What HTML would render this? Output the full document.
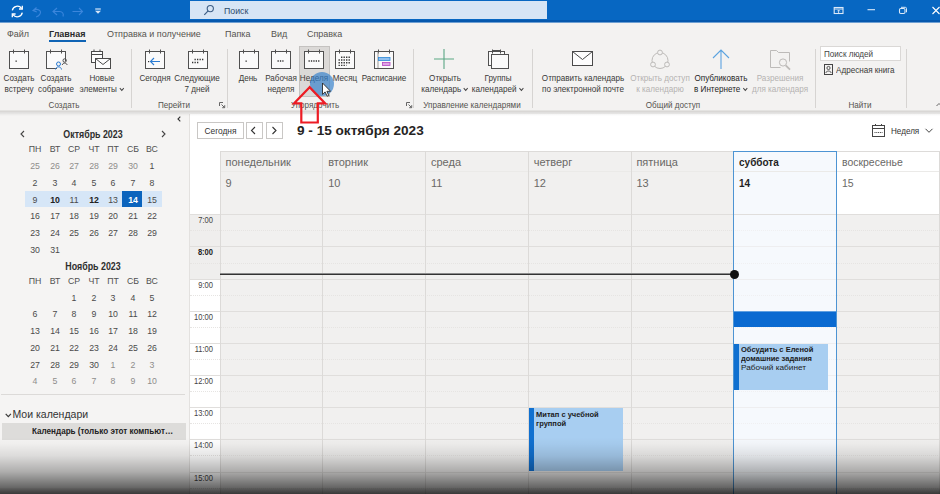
<!DOCTYPE html>
<html lang="ru"><head><meta charset="utf-8"><title>Календарь - Outlook</title>
<style>
html,body{margin:0;padding:0;}
body{width:940px;height:494px;overflow:hidden;position:relative;background:#f3f2f1;font-family:"Liberation Sans",sans-serif;font-size:9.5px;color:#3b3a39;}
.a{position:absolute;}
.t{position:absolute;white-space:nowrap;line-height:12px;transform-origin:0 50%;}
.c{position:absolute;white-space:nowrap;text-align:center;line-height:10.8px;font-size:9px;transform:scaleX(.90);transform-origin:50% 50%;}
.dis{color:#b5b3b1;}
.sep{position:absolute;width:1px;background:#d6d4d2;top:49px;height:59px;}
.gl{position:absolute;top:99.300px;line-height:12px;text-align:center;white-space:nowrap;color:#55534f;font-size:9px;transform:scaleX(.90);transform-origin:50% 50%;}
svg{position:absolute;overflow:visible;}
.mc{position:absolute;width:20px;text-align:center;line-height:14px;font-size:9.500px;color:#4a4a4a;transform:scaleX(.92);}
.mc.g{color:#8f8d8b;}
.mc.b{font-weight:bold;color:#222;}
.mc.w{font-weight:bold;color:#fff;}
.hl{position:absolute;left:220px;right:0;height:1px;background:#e0dedc;}
.hh{position:absolute;left:190px;right:0;height:0;border-top:1px dotted #e6e4e2;}
.vl{position:absolute;top:151px;bottom:0;width:1px;background:#dcdad8;}
.tm{position:absolute;left:183px;width:30px;text-align:right;font-size:8.300px;line-height:10px;color:#444;transform:scaleX(.91);transform-origin:100% 50%;}
.dn{position:absolute;top:155px;font-size:11px;line-height:14px;color:#6a6866;}
.dd{position:absolute;top:176px;font-size:11px;line-height:14px;color:#6a6866;}
</style></head><body>

<div class="a" style="left:0;top:0;width:940px;height:22px;background:#0767c2;"></div>
<div class="a" style="left:0;top:20px;width:940px;height:2px;background:#0658ad;"></div>
<div class="a" style="left:0;top:22px;width:940px;height:1px;background:#6e9fd2;"></div>
<div class="a" style="left:190px;top:1px;width:357px;height:18px;background:#d6e5f5;"></div>
<div class="t" style="left:223.500px;top:4.800px;font-size:9.500px;color:#2b4a6b;transform:scaleX(.92);">Поиск</div>
<svg style="left:203px;top:4px" width="12" height="12" viewBox="0 0 12 12"><circle cx="7.3" cy="4.6" r="3.1" fill="none" stroke="#3d5f86" stroke-width="1.1"/><path d="M5.1 6.9L1.3 10.8" stroke="#3d5f86" stroke-width="1.2" fill="none"/></svg>
<svg style="left:10px;top:4px" width="100" height="16" viewBox="0 0 100 16"><path d="M2.300 6.300A5.200 5.200 0 0 1 11.600 4.300M12.300 8.700A5.200 5.200 0 0 1 3 10.700" fill="none" stroke="#fff" stroke-width="1.300"/><path d="M12.300 1.800V5H9" fill="none" stroke="#fff" stroke-width="1.300"/><path d="M2.300 13.200V10H5.600" fill="none" stroke="#fff" stroke-width="1.300"/><path d="M26.500 3.500l-3.500 3 3.800 1.600M23.300 6.600c4-2.600 8.500-.4 6.700 3.400-.7 1.400-2.200 2.400-3.800 3" fill="none" stroke="#3b86dc" stroke-width="1.100"/><path d="M47 4l-4 3.500 4 3.500M43 7.500h6.500c3 0 4.500 2.200 3.500 5" fill="none" stroke="#3b86dc" stroke-width="1.100"/><path d="M62.500 7.500h10M69 4l3.500 3.500-3.500 3.500" fill="none" stroke="#3b86dc" stroke-width="1.100"/><path d="M85.200 5h5.600" stroke="#d5e6f8" stroke-width="1.200"/><path d="M85 6.800h6l-3 3z" fill="#d5e6f8"/></svg>
<svg style="left:833px;top:4px" width="107" height="14" viewBox="0 0 107 14"><rect x="1.200" y="3.500" width="8.800" height="6" fill="none" stroke="#dbe9f8" stroke-width="1.100"/><path d="M1.200 5h8.800" stroke="#dbe9f8" stroke-width="1"/><path d="M5.600 9V6.200M4.300 7.300l1.300-1.300 1.300 1.300" fill="none" stroke="#dbe9f8" stroke-width=".9"/><path d="M34.500 5.700h7.500" stroke="#dbe9f8" stroke-width="1.100"/><rect x="66.500" y="4.500" width="5.500" height="5" rx="1.200" fill="none" stroke="#dbe9f8" stroke-width="1.100"/><path d="M68 3.300h4.300q1.200 0 1.200 1.200v3.800" fill="none" stroke="#dbe9f8" stroke-width="1"/><path d="M99.500 3l7 7M106.500 3l-7 7" stroke="#fff" stroke-width="1.100"/></svg>
<div class="t" style="left:7px;top:28px;font-size:9.500px;transform:scaleX(.945);color:#55534f;">Файл</div>
<div class="t" style="left:49px;top:28px;font-size:9.500px;transform:scaleX(.945);font-weight:bold;color:#2a2a2a;">Главная</div>
<div class="t" style="left:107px;top:28px;font-size:9.500px;transform:scaleX(.945);color:#55534f;">Отправка и получение</div>
<div class="t" style="left:225px;top:28px;font-size:9.500px;transform:scaleX(.945);color:#55534f;">Папка</div>
<div class="t" style="left:271px;top:28px;font-size:9.500px;transform:scaleX(.945);color:#55534f;">Вид</div>
<div class="t" style="left:307px;top:28px;font-size:9.500px;transform:scaleX(.945);color:#55534f;">Справка</div>
<div class="a" style="left:48.500px;top:40.300px;width:37.500px;height:2px;background:#0f64b5;"></div>
<div class="a" style="left:0;top:110px;width:940px;height:1px;background:#e4e3e1;"></div>
<div class="a" style="left:0;top:111px;width:940px;height:1px;background:#d9d7d5;"></div>
<svg style="left:9px;top:49px" width="21" height="21" viewBox="0 0 21 21"><rect x="0.500" y="2.500" width="19" height="17" fill="#fafafa" stroke="#505050" stroke-width="1"/><path d="M4.500 0.500v4M15.500 0.500v4" stroke="#505050" stroke-width="1"/><rect x="6.5" y="11.5" width="1.3" height="1.3" fill="#333"/></svg>
<div class="c" style="left:-21.2px;top:73px;width:80px;">Создать<br>встречу</div>
<svg style="left:46px;top:49px" width="21" height="21" viewBox="0 0 21 21"><rect x="0.500" y="2.500" width="19" height="17" fill="#fafafa" stroke="#505050" stroke-width="1"/><path d="M4.500 0.500v4M15.500 0.500v4" stroke="#505050" stroke-width="1"/><rect x="11" y="12" width="10" height="9" fill="#f3f2f1"/><circle cx="12.5" cy="15" r="2" fill="none" stroke="#2b7cd3" stroke-width="1"/><path d="M9.5 20.5c.4-3.5 5.6-3.5 6 0" fill="none" stroke="#2b7cd3" stroke-width="1"/><circle cx="18.7" cy="11.5" r="1.7" fill="none" stroke="#4a4a4a" stroke-width="1"/><path d="M16.3 16c.5-2.6 4.3-2.6 4.8 0" fill="none" stroke="#4a4a4a" stroke-width="1"/></svg>
<div class="c" style="left:16.0px;top:73px;width:80px;">Создать<br>собрание</div>
<svg style="left:91px;top:49px" width="22" height="22" viewBox="0 0 22 22"><rect x="0.5" y="2.5" width="11" height="11" fill="#fdfdfd" stroke="#4a4a4a"/><path d="M0.5 5.5h11M3 0.5v2.5M9 0.5v2.5" stroke="#4a4a4a"/><rect x="4.5" y="9.500" width="15" height="10" fill="#fdfdfd" stroke="#4a4a4a"/><path d="M4.5 9.5l7.500 6 7.500-6" fill="none" stroke="#4a4a4a"/></svg>
<div class="c" style="left:61.5px;top:73px;width:80px;">Новые<br>элементы <svg style="position:static;display:inline-block;vertical-align:0" width="6" height="5" viewBox="0 0 6 5"><path d="M0.800 1.200l2.200 2.200 2.200-2.200" fill="none" stroke="#444" stroke-width="1.100"/></svg></div>
<div class="gl" style="left:33.900px;width:60px;">Создать</div>
<div class="sep" style="left:131px;"></div>
<svg style="left:145px;top:49px" width="21" height="21" viewBox="0 0 21 21"><rect x="0.500" y="2.500" width="19" height="17" fill="#fafafa" stroke="#505050" stroke-width="1"/><path d="M4.500 0.500v4M15.500 0.500v4" stroke="#505050" stroke-width="1"/><path d="M5 12.500h10M9 9l-3.500 3.500 3.500 3.500" fill="none" stroke="#2b7cd3" stroke-width="1.1"/><rect x="3" y="12" width="1.200" height="1.200" fill="#333"/></svg>
<div class="c" style="left:114.6px;top:73px;width:80px;">Сегодня</div>
<svg style="left:187.5px;top:49px" width="21" height="21" viewBox="0 0 21 21"><rect x="0.500" y="2.500" width="19" height="17" fill="#fafafa" stroke="#505050" stroke-width="1"/><path d="M4.500 0.500v4M15.500 0.500v4" stroke="#505050" stroke-width="1"/><path d="M6.500 10.500h9.500M4 13.500h7" stroke="#333" stroke-width="1.300" stroke-dasharray="1.3 1.2"/></svg>
<div class="c" style="left:157.3px;top:73px;width:80px;">Следующие<br>7 дней</div>
<div class="gl" style="left:143.800px;width:60px;">Перейти</div>
<svg style="left:219px;top:102px" width="7" height="7" viewBox="0 0 7 7"><path d="M0.500 4V0.500H4" fill="none" stroke="#666"/><path d="M2.500 2.500l3 3M5.700 3.200v2.500H3.200" fill="none" stroke="#666"/></svg>
<div class="sep" style="left:227px;"></div>
<svg style="left:238.5px;top:49px" width="21" height="21" viewBox="0 0 21 21"><rect x="0.500" y="2.500" width="19" height="17" fill="#fafafa" stroke="#505050" stroke-width="1"/><path d="M4.500 0.500v4M15.500 0.500v4" stroke="#505050" stroke-width="1"/><rect x="6.500" y="11.500" width="1.300" height="1.300" fill="#333"/></svg>
<div class="c" style="left:208.1px;top:73px;width:80px;">День</div>
<svg style="left:270.5px;top:49px" width="21" height="21" viewBox="0 0 21 21"><rect x="0.500" y="2.500" width="19" height="17" fill="#fafafa" stroke="#505050" stroke-width="1"/><path d="M4.500 0.500v4M15.500 0.500v4" stroke="#505050" stroke-width="1"/><path d="M6.500 12h6" stroke="#333" stroke-width="1.300" stroke-dasharray="1.3 1.1"/></svg>
<div class="c" style="left:240.8px;top:73px;width:80px;">Рабочая<br>неделя</div>
<div class="a" style="left:299px;top:46px;width:31px;height:51px;background:#dbd9d7;border:1px solid #c4c2c0;box-sizing:border-box;"></div>
<svg style="left:304px;top:49px" width="21" height="21" viewBox="0 0 21 21"><rect x="0.500" y="2.500" width="19" height="17" fill="#fafafa" stroke="#505050" stroke-width="1"/><path d="M4.500 0.500v4M15.500 0.500v4" stroke="#505050" stroke-width="1"/><path d="M4.500 12h11" stroke="#333" stroke-width="1.300" stroke-dasharray="1.3 1.1"/></svg>
<div class="c" style="left:274.4px;top:73px;width:80px;">Неделя</div>
<svg style="left:335px;top:49px" width="21" height="21" viewBox="0 0 21 21"><rect x="0.500" y="2.500" width="19" height="17" fill="#fafafa" stroke="#505050" stroke-width="1"/><path d="M4.500 0.500v4M15.500 0.500v4" stroke="#505050" stroke-width="1"/><path d="M6 8.300h10M3.500 11h12.500M3.500 13.700h12.500M3.500 16.400h8" stroke="#3a3a3a" stroke-width="1.400" stroke-dasharray="1.4 1.1"/></svg>
<div class="c" style="left:305.0px;top:73px;width:80px;">Месяц</div>
<svg style="left:374px;top:49px" width="21" height="21" viewBox="0 0 21 21"><rect x="0.500" y="2.500" width="19" height="17" fill="#fafafa" stroke="#505050"/><path d="M4.500 0.500v4M15.500 0.500v4" stroke="#505050"/><path d="M4 3v16" stroke="#9a9896"/><rect x="4.500" y="8.500" width="11.500" height="3" fill="#8fc0f0" stroke="#2b88d8" stroke-width=".8"/><rect x="8.500" y="13.500" width="7.500" height="3" fill="#dfa3e6" stroke="#b146c2" stroke-width=".8"/></svg>
<div class="c" style="left:343.8px;top:73px;width:80px;">Расписание</div>
<div class="gl" style="left:285.200px;width:60px;">Упорядочить</div>
<svg style="left:405.5px;top:102px" width="7" height="7" viewBox="0 0 7 7"><path d="M0.500 4V0.500H4" fill="none" stroke="#666"/><path d="M2.500 2.500l3 3M5.700 3.200v2.500H3.200" fill="none" stroke="#666"/></svg>
<div class="sep" style="left:413px;"></div>
<svg style="left:433px;top:48px" width="22" height="22" viewBox="0 0 22 22"><path d="M11 1v20M1 11h20" stroke="#5aa784" stroke-width="1.100"/></svg>
<div class="c" style="left:405.0px;top:73px;width:80px;">Открыть<br>календарь <svg style="position:static;display:inline-block;vertical-align:0" width="6" height="5" viewBox="0 0 6 5"><path d="M0.800 1.200l2.200 2.200 2.200-2.200" fill="none" stroke="#444" stroke-width="1.100"/></svg></div>
<svg style="left:488px;top:49px" width="22" height="22" viewBox="0 0 22 22"><rect x="0.500" y="2.500" width="16" height="14" fill="#fafafa" stroke="#505050"/><path d="M4.500 0.500v4M12.500 0.500v4M4.500 1.500h8" stroke="#505050"/><rect x="3.500" y="5.500" width="17" height="14" fill="#fafafa" stroke="#505050"/></svg>
<div class="c" style="left:458.0px;top:73px;width:80px;">Группы<br>календарей <svg style="position:static;display:inline-block;vertical-align:0" width="6" height="5" viewBox="0 0 6 5"><path d="M0.800 1.200l2.200 2.200 2.200-2.200" fill="none" stroke="#444" stroke-width="1.100"/></svg></div>
<div class="gl" style="left:412.400px;width:120px;">Управление календарями</div>
<div class="sep" style="left:532px;"></div>
<svg style="left:572px;top:51px" width="22" height="16" viewBox="0 0 22 16"><rect x="0.500" y="0.500" width="20" height="14" fill="#fdfdfd" stroke="#4a4a4a"/><path d="M0.500 0.500l10 8 10-8" fill="none" stroke="#4a4a4a"/></svg>
<div class="c" style="left:527.6px;top:73px;width:110px;">Отправить календарь<br>по электронной почте</div>
<svg style="left:649px;top:48px" width="22" height="22" viewBox="0 0 22 22"><circle cx="11" cy="12.500" r="8" fill="none" stroke="#bdbbb9"/><circle cx="11" cy="4.500" r="2.400" fill="#f3f2f1" stroke="#bdbbb9"/><circle cx="4" cy="16.500" r="2.400" fill="#f3f2f1" stroke="#bdbbb9"/><circle cx="18" cy="16.500" r="2.400" fill="#f3f2f1" stroke="#bdbbb9"/></svg>
<div class="c dis" style="left:619.8px;top:73px;width:80px;">Открыть доступ<br>к календарю</div>
<svg style="left:710px;top:48px" width="22" height="22" viewBox="0 0 22 22"><path d="M11 21V2M3 10l8-8 8 8" fill="none" stroke="#5ba3e0" stroke-width="1.100"/></svg>
<div class="c" style="left:681.0px;top:73px;width:80px;color:#262626;">Опубликовать<br>в Интернете <svg style="position:static;display:inline-block;vertical-align:0" width="6" height="5" viewBox="0 0 6 5"><path d="M0.800 1.200l2.200 2.200 2.200-2.200" fill="none" stroke="#444" stroke-width="1.100"/></svg></div>
<svg style="left:770px;top:49px" width="22" height="22" viewBox="0 0 22 22"><path d="M0.500 18.500V1.500h6l2 2h11v9" fill="none" stroke="#bdbbb9"/><path d="M0.500 18.500h10" stroke="#bdbbb9"/><circle cx="13" cy="13.500" r="3.600" fill="#f3f2f1" stroke="#bdbbb9"/><path d="M15.700 16.300l4.300 4.300" stroke="#bdbbb9" stroke-width="1.800"/></svg>
<div class="c dis" style="left:739.8px;top:73px;width:80px;">Разрешения<br>для календаря</div>
<div class="gl" style="left:632.600px;width:80px;">Общий доступ</div>
<div class="sep" style="left:815px;"></div>
<div class="a" style="left:820px;top:46px;width:81px;height:15px;background:#fff;border:1px solid #dad8d6;box-sizing:border-box;"></div>
<div class="t" style="left:823.500px;top:47.500px;font-size:9px;color:#444;transform:scaleX(.9);">Поиск людей</div>
<svg style="left:824px;top:64px" width="10" height="12" viewBox="0 0 10 12"><rect x="0.500" y="0.500" width="8" height="10" fill="none" stroke="#444"/><circle cx="4.500" cy="4" r="1.600" fill="none" stroke="#444" stroke-width=".9"/><path d="M1.800 9c.4-2.600 5-2.600 5.400 0" fill="none" stroke="#444" stroke-width=".9"/></svg>
<div class="t" style="left:836px;top:63.500px;font-size:9px;color:#3b3a39;transform:scaleX(.9);">Адресная книга</div>
<div class="gl" style="left:830px;width:60px;">Найти</div>
<div class="sep" style="left:906px;"></div>
<svg style="left:936px;top:102px" width="6" height="5" viewBox="0 0 6 5"><path d="M0.500 4l2.500-2.500 2.500 2.500" fill="none" stroke="#666"/></svg>
<div class="a" style="left:0;top:114px;width:189px;height:380px;background:#f5f4f3;"></div>
<svg style="left:176.500px;top:115.500px" width="4" height="6" viewBox="0 0 4 6"><path d="M3.300 0.700l-2.300 2.300 2.300 2.300" fill="none" stroke="#333" stroke-width="1.100"/></svg>
<div class="a" style="left:25px;top:191px;width:137px;height:16px;background:#d6e6f7;"></div>
<div class="a" style="left:122px;top:191px;width:20px;height:16px;background:#0b64bd;"></div>
<div class="a" style="left:43px;top:127.5px;width:100px;text-align:center;white-space:nowrap;font-weight:bold;font-size:10px;color:#2e2e2e;line-height:14px;transform:scaleX(.885);">Октябрь 2023</div>
<div class="mc" style="left:25px;top:141.8px;font-size:9.500px;color:#505050;">ПН</div>
<div class="mc" style="left:44.5px;top:141.8px;font-size:9.500px;color:#505050;">ВТ</div>
<div class="mc" style="left:64px;top:141.8px;font-size:9.500px;color:#505050;">СР</div>
<div class="mc" style="left:83.5px;top:141.8px;font-size:9.500px;color:#505050;">ЧТ</div>
<div class="mc" style="left:103px;top:141.8px;font-size:9.500px;color:#505050;">ПТ</div>
<div class="mc" style="left:122.5px;top:141.8px;font-size:9.500px;color:#505050;">СБ</div>
<div class="mc" style="left:142px;top:141.8px;font-size:9.500px;color:#505050;">ВС</div>
<div class="mc g" style="left:25px;top:158.8px;">25</div>
<div class="mc g" style="left:44.5px;top:158.8px;">26</div>
<div class="mc g" style="left:64px;top:158.8px;">27</div>
<div class="mc g" style="left:83.5px;top:158.8px;">28</div>
<div class="mc g" style="left:103px;top:158.8px;">29</div>
<div class="mc g" style="left:122.5px;top:158.8px;">30</div>
<div class="mc " style="left:142px;top:158.8px;">1</div>
<div class="mc " style="left:25px;top:175.7px;">2</div>
<div class="mc " style="left:44.5px;top:175.7px;">3</div>
<div class="mc " style="left:64px;top:175.7px;">4</div>
<div class="mc " style="left:83.5px;top:175.7px;">5</div>
<div class="mc " style="left:103px;top:175.7px;">6</div>
<div class="mc " style="left:122.5px;top:175.7px;">7</div>
<div class="mc " style="left:142px;top:175.7px;">8</div>
<div class="mc " style="left:25px;top:192.5px;">9</div>
<div class="mc b" style="left:44.5px;top:192.5px;">10</div>
<div class="mc " style="left:64px;top:192.5px;">11</div>
<div class="mc b" style="left:83.5px;top:192.5px;">12</div>
<div class="mc " style="left:103px;top:192.5px;">13</div>
<div class="mc w" style="left:122.5px;top:192.5px;">14</div>
<div class="mc " style="left:142px;top:192.5px;">15</div>
<div class="mc " style="left:25px;top:209.4px;">16</div>
<div class="mc " style="left:44.5px;top:209.4px;">17</div>
<div class="mc " style="left:64px;top:209.4px;">18</div>
<div class="mc " style="left:83.5px;top:209.4px;">19</div>
<div class="mc " style="left:103px;top:209.4px;">20</div>
<div class="mc " style="left:122.5px;top:209.4px;">21</div>
<div class="mc " style="left:142px;top:209.4px;">22</div>
<div class="mc " style="left:25px;top:226.2px;">23</div>
<div class="mc " style="left:44.5px;top:226.2px;">24</div>
<div class="mc " style="left:64px;top:226.2px;">25</div>
<div class="mc " style="left:83.5px;top:226.2px;">26</div>
<div class="mc " style="left:103px;top:226.2px;">27</div>
<div class="mc " style="left:122.5px;top:226.2px;">28</div>
<div class="mc " style="left:142px;top:226.2px;">29</div>
<div class="mc " style="left:25px;top:243.1px;">30</div>
<div class="mc " style="left:44.5px;top:243.1px;">31</div>
<div class="a" style="left:43px;top:259.8px;width:100px;text-align:center;white-space:nowrap;font-weight:bold;font-size:10px;color:#2e2e2e;line-height:14px;transform:scaleX(.885);">Ноябрь 2023</div>
<div class="mc" style="left:25px;top:274.3px;font-size:9.500px;color:#505050;">ПН</div>
<div class="mc" style="left:44.5px;top:274.3px;font-size:9.500px;color:#505050;">ВТ</div>
<div class="mc" style="left:64px;top:274.3px;font-size:9.500px;color:#505050;">СР</div>
<div class="mc" style="left:83.5px;top:274.3px;font-size:9.500px;color:#505050;">ЧТ</div>
<div class="mc" style="left:103px;top:274.3px;font-size:9.500px;color:#505050;">ПТ</div>
<div class="mc" style="left:122.5px;top:274.3px;font-size:9.500px;color:#505050;">СБ</div>
<div class="mc" style="left:142px;top:274.3px;font-size:9.500px;color:#505050;">ВС</div>
<div class="mc " style="left:64px;top:290.5px;">1</div>
<div class="mc " style="left:83.5px;top:290.5px;">2</div>
<div class="mc " style="left:103px;top:290.5px;">3</div>
<div class="mc " style="left:122.5px;top:290.5px;">4</div>
<div class="mc " style="left:142px;top:290.5px;">5</div>
<div class="mc " style="left:25px;top:307.2px;">6</div>
<div class="mc " style="left:44.5px;top:307.2px;">7</div>
<div class="mc " style="left:64px;top:307.2px;">8</div>
<div class="mc " style="left:83.5px;top:307.2px;">9</div>
<div class="mc " style="left:103px;top:307.2px;">10</div>
<div class="mc " style="left:122.5px;top:307.2px;">11</div>
<div class="mc " style="left:142px;top:307.2px;">12</div>
<div class="mc " style="left:25px;top:324.0px;">13</div>
<div class="mc " style="left:44.5px;top:324.0px;">14</div>
<div class="mc " style="left:64px;top:324.0px;">15</div>
<div class="mc " style="left:83.5px;top:324.0px;">16</div>
<div class="mc " style="left:103px;top:324.0px;">17</div>
<div class="mc " style="left:122.5px;top:324.0px;">18</div>
<div class="mc " style="left:142px;top:324.0px;">19</div>
<div class="mc " style="left:25px;top:340.8px;">20</div>
<div class="mc " style="left:44.5px;top:340.8px;">21</div>
<div class="mc " style="left:64px;top:340.8px;">22</div>
<div class="mc " style="left:83.5px;top:340.8px;">23</div>
<div class="mc " style="left:103px;top:340.8px;">24</div>
<div class="mc " style="left:122.5px;top:340.8px;">25</div>
<div class="mc " style="left:142px;top:340.8px;">26</div>
<div class="mc " style="left:25px;top:357.5px;">27</div>
<div class="mc " style="left:44.5px;top:357.5px;">28</div>
<div class="mc " style="left:64px;top:357.5px;">29</div>
<div class="mc " style="left:83.5px;top:357.5px;">30</div>
<div class="mc g" style="left:103px;top:357.5px;">1</div>
<div class="mc g" style="left:122.5px;top:357.5px;">2</div>
<div class="mc g" style="left:142px;top:357.5px;">3</div>
<div class="mc g" style="left:25px;top:374.2px;">4</div>
<div class="mc g" style="left:44.5px;top:374.2px;">5</div>
<div class="mc g" style="left:64px;top:374.2px;">6</div>
<div class="mc g" style="left:83.5px;top:374.2px;">7</div>
<div class="mc g" style="left:103px;top:374.2px;">8</div>
<div class="mc g" style="left:122.5px;top:374.2px;">9</div>
<div class="mc g" style="left:142px;top:374.2px;">10</div>
<svg style="left:20px;top:130px" width="5" height="8" viewBox="0 0 5 8"><path d="M4 1l-3 3 3 3" fill="none" stroke="#444" stroke-width="1.100"/></svg>
<svg style="left:161px;top:130px" width="5" height="8" viewBox="0 0 5 8"><path d="M1 1l3 3-3 3" fill="none" stroke="#444" stroke-width="1.100"/></svg>
<div class="a" style="left:1px;top:394px;width:184px;height:1px;background:#dcdad8;"></div>
<svg style="left:4.500px;top:412.500px" width="7" height="5" viewBox="0 0 7 5"><path d="M0.700 0.800l2.600 2.800 2.600-2.800" fill="none" stroke="#3a3a3a" stroke-width="1.200"/></svg>
<div class="t" style="left:12.500px;top:407px;font-size:10.500px;color:#333;line-height:14px;">Мои календари</div>
<div class="a" style="left:1.500px;top:423px;width:184.500px;height:16.500px;background:#dddcda;"></div>
<div class="t" style="left:31.700px;top:425px;font-size:9px;font-weight:bold;color:#222;line-height:12px;transform:scaleX(.9);">Календарь (только этот компьют…</div>
<div class="a" style="left:189px;top:114px;width:751px;height:380px;background:#fff;"></div>
<div class="a" style="left:189px;top:114px;width:1px;height:380px;background:#e3e1df;"></div>
<div class="a" style="left:197px;top:122px;width:47px;height:17px;border:1px solid #c9c7c5;box-sizing:border-box;background:#fff;"></div>
<div class="c" style="left:197px;top:124.500px;width:47px;font-size:9.300px;color:#333;line-height:12px;">Сегодня</div>
<div class="a" style="left:246px;top:122px;width:17px;height:17px;border:1px solid #c9c7c5;box-sizing:border-box;background:#fff;"></div>
<svg style="left:249px;top:124px" width="11" height="13" viewBox="0 0 11 13"><path d="M6 3l-3.500 3.500 3.500 3.500" fill="none" stroke="#333" stroke-width="1.100"/></svg>
<div class="a" style="left:266px;top:122px;width:17px;height:17px;border:1px solid #c9c7c5;box-sizing:border-box;background:#fff;"></div>
<svg style="left:269px;top:124px" width="11" height="13" viewBox="0 0 11 13"><path d="M3.500 3l3.500 3.500-3.500 3.500" fill="none" stroke="#333" stroke-width="1.100"/></svg>
<div class="t" style="left:297px;top:123px;font-size:13.600px;font-weight:bold;color:#252423;line-height:16px;">9 - 15 октября 2023</div>
<svg style="left:872px;top:124px" width="14" height="14" viewBox="0 0 14 14"><rect x="0.500" y="1.500" width="12" height="11" fill="none" stroke="#444"/><path d="M0.500 4.500h12M3.500 0v2M9.500 0v2" stroke="#444"/><path d="M2.500 8.500h8" stroke="#444" stroke-dasharray="1 .8"/></svg>
<div class="t" style="left:891px;top:125.300px;font-size:9px;color:#333;transform:scaleX(.9);">Неделя</div>
<svg style="left:925px;top:128px" width="8" height="6" viewBox="0 0 8 6"><path d="M0.500 0.800l3.500 3.500 3.500-3.500" fill="none" stroke="#444"/></svg>
<div class="a" style="left:220px;top:151px;width:616px;height:343px;background:#f1f0ef;"></div>
<div class="a" style="left:836px;top:214px;width:104px;height:280px;background:#f1f0ef;"></div>
<div class="a" style="left:734px;top:151px;width:102px;height:343px;background:#f6f9fd;"></div>
<div class="a" style="left:220px;top:151px;width:720px;height:1px;background:#dddbd9;"></div>
<div class="a" style="left:220px;top:171px;width:719px;height:1px;background:#ebeae8;"></div>
<div class="a" style="left:190px;top:214px;width:30px;height:65px;background:#efeeed;"></div>
<div class="a" style="left:939px;top:151px;width:1px;height:343px;background:#e9e8e7;"></div>
<div class="hl" style="top:214px;left:190px;"></div>
<div class="hh" style="top:230px;"></div>
<div class="tm" style="top:215px;">7:00</div>
<div class="hl" style="top:246px;left:190px;"></div>
<div class="hh" style="top:263px;"></div>
<div class="tm" style="top:247px;font-weight:bold;color:#222;">8:00</div>
<div class="hl" style="top:279px;left:190px;"></div>
<div class="hh" style="top:295px;"></div>
<div class="tm" style="top:280px;">9:00</div>
<div class="hl" style="top:311px;left:190px;"></div>
<div class="hh" style="top:327px;"></div>
<div class="tm" style="top:312px;">10:00</div>
<div class="hl" style="top:343px;left:190px;"></div>
<div class="hh" style="top:359px;"></div>
<div class="tm" style="top:344px;">11:00</div>
<div class="hl" style="top:375px;left:190px;"></div>
<div class="hh" style="top:391px;"></div>
<div class="tm" style="top:376px;">12:00</div>
<div class="hl" style="top:407px;left:190px;"></div>
<div class="hh" style="top:423px;"></div>
<div class="tm" style="top:408px;">13:00</div>
<div class="hl" style="top:439px;left:190px;"></div>
<div class="hh" style="top:455px;"></div>
<div class="tm" style="top:440px;">14:00</div>
<div class="hl" style="top:472px;left:190px;"></div>
<div class="hh" style="top:488px;"></div>
<div class="tm" style="top:473px;">15:00</div>
<div class="vl" style="left:220px;"></div>
<div class="vl" style="left:322px;"></div>
<div class="vl" style="left:425px;"></div>
<div class="vl" style="left:528px;"></div>
<div class="vl" style="left:631px;"></div>
<div class="vl" style="left:733px;"></div>
<div class="vl" style="left:836px;"></div>
<div class="vl" style="left:939px;"></div>
<div class="dn" style="left:225.5px;">понедельник</div>
<div class="dd" style="left:225.5px;">9</div>
<div class="dn" style="left:328.2px;">вторник</div>
<div class="dd" style="left:328.2px;">10</div>
<div class="dn" style="left:431.0px;">среда</div>
<div class="dd" style="left:431.0px;">11</div>
<div class="dn" style="left:533.7px;">четверг</div>
<div class="dd" style="left:533.7px;">12</div>
<div class="dn" style="left:636.4px;">пятница</div>
<div class="dd" style="left:636.4px;">13</div>
<div class="dn" style="left:739.1px;font-weight:bold;color:#1f1f1f;transform:scaleX(.91);transform-origin:0 50%;">суббота</div>
<div class="dd" style="left:739.1px;font-weight:bold;color:#1f1f1f;transform:scaleX(.91);transform-origin:0 50%;">14</div>
<div class="dn" style="left:841.9px;transform:scaleX(.95);transform-origin:0 50%;">воскресенье</div>
<div class="dd" style="left:841.9px;transform:scaleX(.95);transform-origin:0 50%;">15</div>
<div class="a" style="left:734px;top:215px;width:102px;height:279px;background:rgba(246,249,253,.6);"></div>
<div class="a" style="left:733px;top:151px;width:1px;height:343px;background:#4d94d3;"></div>
<div class="a" style="left:836px;top:151px;width:1px;height:343px;background:#4d94d3;"></div>
<div class="a" style="left:733px;top:151px;width:104px;height:1px;background:#4d94d3;"></div>
<div class="a" style="left:220px;top:273px;width:514px;height:1px;background:#8c8c8c;"></div>
<div class="a" style="left:220px;top:274px;width:514px;height:1px;background:#333;"></div>
<div class="a" style="left:729.500px;top:269.500px;width:9px;height:9px;border-radius:50%;background:#111;"></div>
<div class="a" style="left:734px;top:312px;width:102px;height:15px;background:#0a6ad1;"></div>
<div class="a" style="left:734px;top:311px;width:102px;height:1px;background:#5f9fe0;"></div>
<div class="a" style="left:734px;top:343.500px;width:94px;height:46.500px;background:#a8cef1;"></div>
<div class="a" style="left:734px;top:343.500px;width:4.500px;height:46.500px;background:#1070d0;"></div>
<div class="t" style="left:741px;top:345px;font-size:8px;line-height:9px;color:#1b1b1b;"><b style="display:inline-block;transform:scaleX(.94);transform-origin:0 50%;">Обсудить с Еленой<br>домашние задания</b><br><span style="display:inline-block;transform:scaleX(1.03);transform-origin:0 50%;color:#222;">Рабочий кабинет</span></div>
<div class="a" style="left:529px;top:408px;width:94px;height:63px;background:#a8cef1;"></div>
<div class="a" style="left:529px;top:408px;width:4.500px;height:63px;background:#1070d0;"></div>
<div class="t" style="left:536px;top:409.500px;font-size:8px;line-height:9px;color:#1b1b1b;"><b style="display:inline-block;transform:scaleX(.94);transform-origin:0 50%;">Митап с учебной<br>группой</b></div>
<div class="a" style="left:0;top:112px;width:940px;height:4px;background:linear-gradient(rgba(0,0,0,.09),rgba(0,0,0,0));"></div>
<div class="a" style="left:310.300px;top:71.500px;width:24px;height:24px;border-radius:50%;background:rgba(52,128,204,.68);"></div>
<svg style="left:321.200px;top:82.300px" width="12" height="16" viewBox="0 0 12 16"><path d="M1.500 1v11.400l2.600-2.500 2 4.300 1.700-.7-1.900-4.200h3.700z" fill="#fff" stroke="#2a2a2a" stroke-width=".9" stroke-linejoin="round"/></svg>
<svg style="left:285px;top:80px" width="50" height="46" viewBox="285 80 50 46"><path d="M309.600 87.200L294 103.400H301.300V122.500H317.800V103.400H325.200Z" fill="none" stroke="#ed1c24" stroke-width="2.200" stroke-linejoin="miter"/></svg>
<div class="a" style="left:0;top:437px;width:940px;height:57px;background:linear-gradient(rgba(0,0,0,0) 0%,rgba(0,0,0,.025) 12%,rgba(0,0,0,.10) 33%,rgba(0,0,0,.29) 61%,rgba(0,0,0,.53) 84%,rgba(0,0,0,.70) 100%);"></div>
<div class="a" style="left:0;top:488px;width:940px;height:6px;background:linear-gradient(rgba(0,0,0,.05),rgba(0,0,0,.2));"></div>
</body></html>
